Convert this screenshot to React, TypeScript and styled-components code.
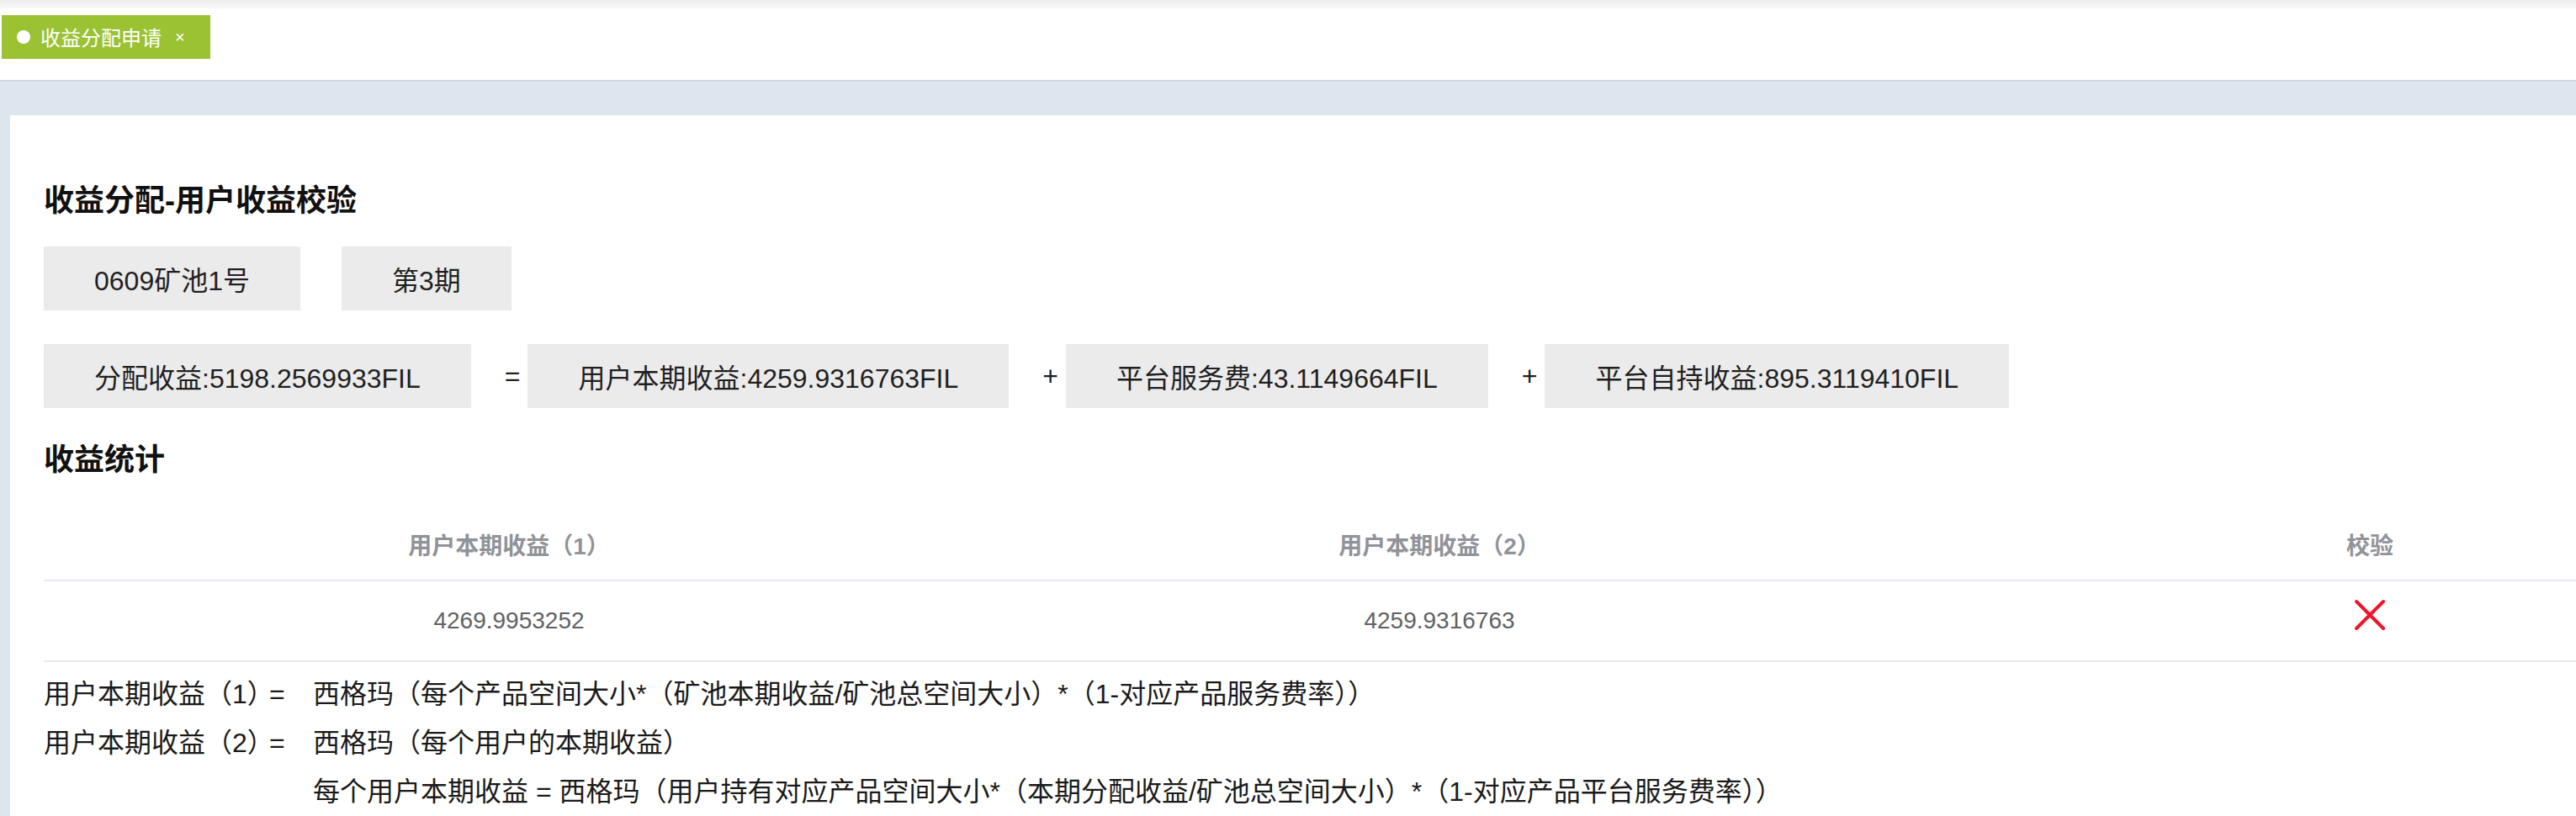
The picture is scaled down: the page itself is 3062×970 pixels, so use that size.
import React from "react";
import styled, { createGlobalStyle } from "styled-components";

const GlobalStyle = createGlobalStyle`
    html, body {
        margin: 0;
        padding: 0;
        background: #ffffff;
        overflow: hidden;
    }
    body {
        font-family: "Liberation Sans", "Noto Sans CJK SC", sans-serif;
        color: #1f1f1f;
    }
`;

const Page = styled.div`
    width: 3062px;
    height: 970px;
    overflow: hidden;
    display: flex;
    flex-direction: column;
`;

const TopShade = styled.div`
    height: 10px;
    background: linear-gradient(to bottom, #eeeeee, #f8f8f8);
`;

const TagsBar = styled.div`
    height: 88px;
    box-sizing: border-box;
    padding: 8px 0 0 2px;
    background: #ffffff;
    border-bottom: 2px solid #d3d9e0;
    display: flex;
    align-items: flex-start;
`;

const Tag = styled.div`
    height: 52px;
    display: flex;
    align-items: center;
    padding: 0 30px 0 18px;
    background: #9bc233;
    color: #ffffff;
    font-size: 24px;
    white-space: nowrap;
`;

const TagDot = styled.span`
    width: 16px;
    height: 16px;
    border-radius: 50%;
    background: #ffffff;
    margin-right: 12px;
`;

const TagClose = styled.span`
    font-size: 20px;
    margin-left: 16px;
    line-height: 1;
`;

const Main = styled.div`
    flex: 1;
    background: #dde6ee;
    padding: 40px 0 0 12px;
    display: flex;
`;

const Panel = styled.div`
    flex: 1;
    background: #ffffff;
    padding: 71px 0 0 40px;
    overflow: hidden;
`;

const Heading = styled.h2<{ $top?: number }>`
    margin: ${(p) => p.$top || 0}px 0 0;
    height: 54px;
    display: flex;
    align-items: center;
    font-size: 36px;
    font-weight: bold;
    color: #111111;
`;

const ChipRow = styled.div<{ $top: number; $gap?: number }>`
    display: flex;
    align-items: center;
    margin-top: ${(p) => p.$top}px;
    gap: ${(p) => p.$gap || 0}px;
`;

const Chip = styled.div`
    height: 76px;
    display: flex;
    align-items: center;
    padding: 0 60px;
    background: #ebebeb;
    font-size: 32px;
    white-space: nowrap;
`;

const Operator = styled.span`
    font-size: 32px;
    margin: 0 9px 0 40px;
`;

const Table = styled.div`
    margin-top: 35px;
    display: grid;
    grid-template-columns: repeat(3, 1106px);
`;

const Cell = styled.div<{ $head?: boolean }>`
    height: ${(p) => (p.$head ? 84 : 94)}px;
    display: flex;
    align-items: center;
    justify-content: center;
    border-bottom: 2px solid #e8e9f1;
    font-size: 28px;
    font-weight: ${(p) => (p.$head ? "bold" : "normal")};
    color: ${(p) => (p.$head ? "#909399" : "#606266")};
    white-space: nowrap;
`;

const FailMark = styled.svg`
    width: 38px;
    height: 38px;
    margin-top: -14px;
`;

const Formulas = styled.div`
    margin-top: 9px;
    display: grid;
    grid-template-columns: 268px 52px max-content;
    font-size: 32px;
    line-height: 58px;
    color: #1a1a1a;
    white-space: nowrap;
`;

const FormulaNote = styled.div`
    grid-column: 3;
`;

const App = () => {
    return (
        <Page>
            <GlobalStyle />
            <TopShade />
            <TagsBar>
                <Tag>
                    <TagDot />
                    收益分配申请
                    <TagClose>×</TagClose>
                </Tag>
            </TagsBar>
            <Main>
                <Panel>
                    <Heading>收益分配-用户收益校验</Heading>
                    <ChipRow $top={31} $gap={49}>
                        <Chip>0609矿池1号</Chip>
                        <Chip>第3期</Chip>
                    </ChipRow>
                    <ChipRow $top={40}>
                        <Chip>分配收益:5198.2569933FIL</Chip>
                        <Operator>=</Operator>
                        <Chip>用户本期收益:4259.9316763FIL</Chip>
                        <Operator>+</Operator>
                        <Chip>平台服务费:43.1149664FIL</Chip>
                        <Operator>+</Operator>
                        <Chip>平台自持收益:895.3119410FIL</Chip>
                    </ChipRow>
                    <Heading $top={31}>收益统计</Heading>
                    <Table>
                        <Cell $head>用户本期收益（1）</Cell>
                        <Cell $head>用户本期收益（2）</Cell>
                        <Cell $head>校验</Cell>
                        <Cell>4269.9953252</Cell>
                        <Cell>4259.9316763</Cell>
                        <Cell>
                            <FailMark viewBox="0 0 38 38">
                                <path
                                    d="M3 3 L35 35 M35 3 L3 35"
                                    stroke="#f0142a"
                                    strokeWidth="4"
                                    strokeLinecap="round"
                                    fill="none"
                                />
                            </FailMark>
                        </Cell>
                    </Table>
                    <Formulas>
                        <div>用户本期收益（1）</div>
                        <div>=</div>
                        <div>西格玛（每个产品空间大小*（矿池本期收益/矿池总空间大小）*（1-对应产品服务费率））</div>
                        <div>用户本期收益（2）</div>
                        <div>=</div>
                        <div>西格玛（每个用户的本期收益）</div>
                        <FormulaNote>
                            每个用户本期收益 = 西格玛（用户持有对应产品空间大小*（本期分配收益/矿池总空间大小）*（1-对应产品平台服务费率））
                        </FormulaNote>
                    </Formulas>
                </Panel>
            </Main>
        </Page>
    );
};

export default App;
